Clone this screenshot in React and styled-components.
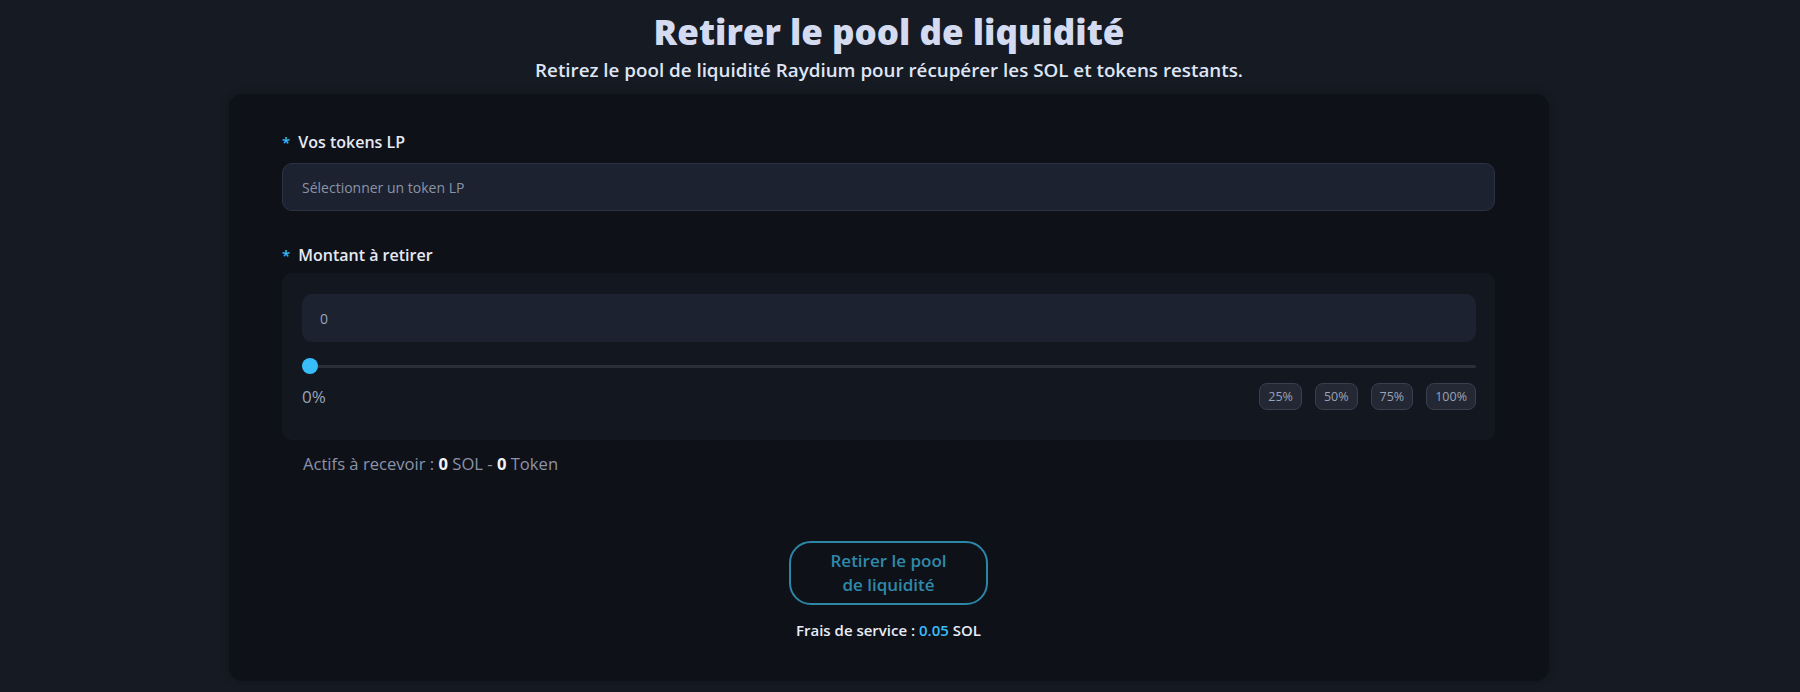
import styled, { createGlobalStyle } from 'styled-components'

const GlobalStyles = createGlobalStyle`
	* { box-sizing: border-box; }
	body {
		margin: 0;
		background: #161a23;
		font-family: "Open Sans", "Noto Sans", sans-serif;
		color: #e6e9f2;
	}
`

const Page = styled.div`
	min-height: 100vh;
	display: flex;
	flex-direction: column;
	align-items: center;
	padding: 10px 22px 0 0;
`

const Title = styled.h1`
	margin: 0;
	font-size: 35px;
	line-height: 44px;
	font-weight: 800;
	color: #d4dbf0;
`

const Subtitle = styled.p`
	margin: 4px 0 0;
	font-size: 18.8px;
	line-height: 24px;
	font-weight: 600;
	color: #dfe5f5;
`

const Card = styled.div`
	width: 1320px;
	margin-top: 12px;
	padding: 37px 54px 41px 53px;
	background: #0f1119;
	border-radius: 14px;
	box-shadow: 0 0 8px rgba(0, 0, 0, 0.25);
	display: flex;
	flex-direction: column;
`

const Field = styled.div`
	display: flex;
	flex-direction: column;
	gap: ${p => p.$gap}px;
	margin-bottom: ${p => p.$mb || 0}px;
`

const Label = styled.label`
	font-size: 16px;
	line-height: 22px;
	font-weight: 600;
	color: #e6e9f2;
	span {
		color: #38bdf8;
		margin-right: 8px;
		font-size: 15px;
	}
`

const Select = styled.div`
	height: 48px;
	display: flex;
	align-items: center;
	padding: 0 19px;
	background: #1c2230;
	border: 1px solid #2b3242;
	border-radius: 10px;
	font-size: 14px;
	color: #8b93a7;
`

const Panel = styled.div`
	background: #131720;
	border-radius: 10px;
	padding: 21px 19px 30px 20px;
	display: flex;
	flex-direction: column;
`

const AmountInput = styled.div`
	height: 48px;
	display: flex;
	align-items: center;
	padding: 0 18px;
	background: #1c2230;
	border-radius: 10px;
	font-size: 14px;
	color: #9aa3b8;
`

const Slider = styled.div`
	margin-top: 16px;
	height: 16px;
	display: flex;
	align-items: center;
	position: relative;
`

const Track = styled.div`
	flex: 1;
	height: 3px;
	border-radius: 2px;
	background: #2a2f3a;
`

const Thumb = styled.div`
	position: absolute;
	left: 0;
	top: 0;
	width: 16px;
	height: 16px;
	border-radius: 50%;
	background: #38bdf8;
`

const SliderFoot = styled.div`
	margin-top: 9px;
	height: 27px;
	display: flex;
	align-items: center;
	justify-content: space-between;
`

const Percent = styled.span`
	font-size: 17px;
	color: #9aa3b8;
`

const Quick = styled.div`
	display: flex;
	gap: 13px;
`

const QuickBtn = styled.button`
	height: 27px;
	padding: 0 8px;
	background: #232834;
	border: 1px solid #393f4d;
	border-radius: 8px;
	font-family: inherit;
	font-size: 12.5px;
	color: #9aa3b8;
`

const Receive = styled.div`
	margin-top: 14px;
	padding-left: 21px;
	font-size: 16.6px;
	line-height: 20px;
	color: #8b93a7;
	b {
		font-weight: 700;
		color: #f1f3f8;
	}
`

const Footer = styled.div`
	margin-top: 67px;
	display: flex;
	flex-direction: column;
	align-items: center;
`

const Submit = styled.button`
	width: 199px;
	height: 64px;
	background: transparent;
	border: 2px solid #2b87a5;
	border-radius: 22px;
	font-family: inherit;
	font-size: 17px;
	line-height: 24px;
	font-weight: 600;
	color: #2f89a9;
`

const Fee = styled.div`
	margin-top: 15px;
	font-size: 15px;
	line-height: 20px;
	font-weight: 600;
	color: #e8ecf5;
	span {
		color: #38bdf8;
	}
`

const App = () => {
	return (
		<Page>
			<GlobalStyles />
			<Title>Retirer le pool de liquidité</Title>
			<Subtitle>Retirez le pool de liquidité Raydium pour récupérer les SOL et tokens restants.</Subtitle>
			<Card>
				<Field $gap={10} $mb={33}>
					<Label><span>*</span>Vos tokens LP</Label>
					<Select>Sélectionner un token LP</Select>
				</Field>
				<Field $gap={7}>
					<Label><span>*</span>Montant à retirer</Label>
					<Panel>
						<AmountInput>0</AmountInput>
						<Slider>
							<Track />
							<Thumb />
						</Slider>
						<SliderFoot>
							<Percent>0%</Percent>
							<Quick>
								{['25%', '50%', '75%', '100%'].map(p => (
									<QuickBtn key={p}>{p}</QuickBtn>
								))}
							</Quick>
						</SliderFoot>
					</Panel>
				</Field>
				<Receive>
					Actifs à recevoir : <b>0</b> SOL - <b>0</b> Token
				</Receive>
				<Footer>
					<Submit>Retirer le pool<br />de liquidité</Submit>
					<Fee>Frais de service : <span>0.05</span> SOL</Fee>
				</Footer>
			</Card>
		</Page>
	)
}

export default App
